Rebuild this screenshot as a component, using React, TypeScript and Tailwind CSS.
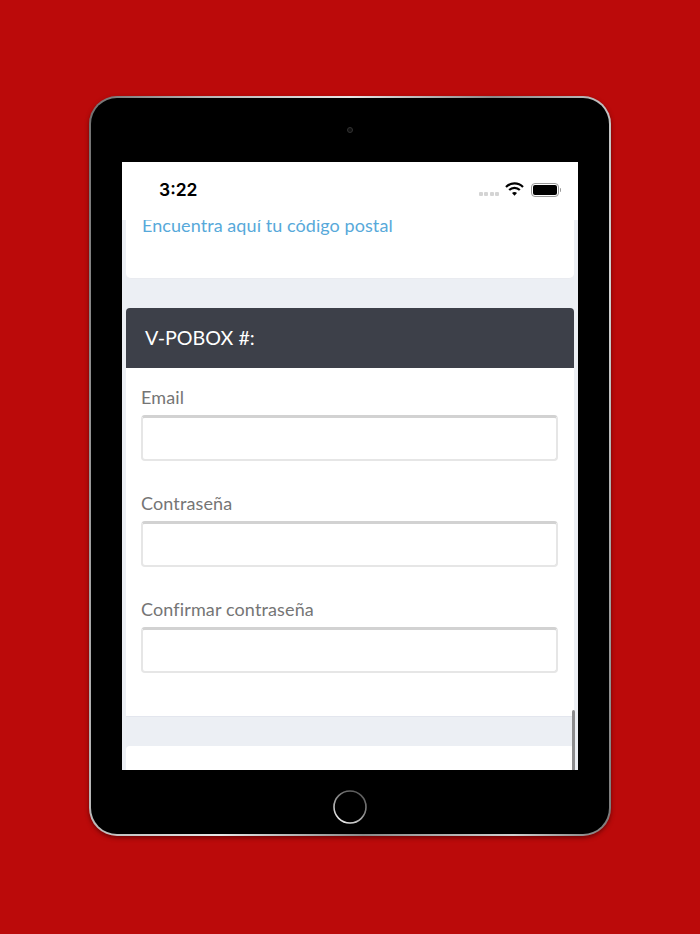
export default function App() {
  const fields = ["Email", "Contraseña", "Confirmar contraseña"];
  return (
    <div className="relative h-[934px] w-[700px] overflow-hidden bg-[#bb0a0a] pl-[89px] pt-[96px] font-['Lato',sans-serif]">
      <div className="h-[740px] w-[522px] rounded-[28px] bg-[linear-gradient(100deg,#6f6f6f_0%,#b5b5b5_18%,#e6e6e6_40%,#8a8a8a_62%,#d0d0d0_85%,#777_100%)] p-[2px] shadow-[0_2px_4px_rgba(60,0,0,0.6)]">
        <div className="flex h-[736px] w-[518px] flex-col items-center rounded-[26px] bg-black pt-[64px]">
          <div className="relative flex h-[608px] w-[456px] flex-col overflow-hidden bg-[#eceff4]">
            <div className="absolute left-0 top-0 z-10 flex h-[58px] w-full items-center justify-between bg-white pb-[3px] pl-[37px] pr-[17px]">
              <span className="font-['Inter',sans-serif] text-[17.5px] font-semibold leading-none text-black">3:22</span>
              <div className="flex items-center gap-[6px]">
                <div className="mt-[8px] flex gap-[1.5px]">
                  <span className="h-[4px] w-[4px] rounded-[1px] bg-[#d4d4d4]" />
                  <span className="h-[4px] w-[4px] rounded-[1px] bg-[#d4d4d4]" />
                  <span className="h-[4px] w-[4px] rounded-[1px] bg-[#d4d4d4]" />
                  <span className="h-[4px] w-[4px] rounded-[1px] bg-[#d4d4d4]" />
                </div>
                <svg width="19" height="14" viewBox="0 0 19 14" className="mb-[1px]">
                  <path d="M1 5 A12 12 0 0 1 18 5" fill="none" stroke="#000" strokeWidth="2.2" />
                  <path d="M4.2 8 A7.5 7.5 0 0 1 14.8 8" fill="none" stroke="#000" strokeWidth="2.2" />
                  <path d="M7 11 A3.4 3.4 0 0 1 12 11 L9.5 13.8 Z" fill="#000" />
                </svg>
                <div className="ml-[1px] flex items-center">
                  <div className="flex h-[14px] w-[28px] items-center justify-center rounded-[4px] border border-[#9a9a9a]">
                    <div className="h-[10px] w-[24px] rounded-[2px] bg-black" />
                  </div>
                  <div className="ml-[1px] h-[4px] w-[1px] rounded-r bg-[#9a9a9a]" />
                </div>
              </div>
            </div>

            <div className="mx-[4px] mt-[58px] h-[59px] shrink-0 overflow-hidden rounded-b-[5px] border-b border-[#e9ebf0] bg-white px-[16px]">
              <a className="-mt-[6px] block text-[18px] leading-[22px] tracking-[0.07px] text-[#57a9da]">Encuentra aquí tu código postal</a>
            </div>

            <div className="mx-[4px] mt-[29px] shrink-0">
              <div className="flex h-[60px] items-center rounded-t-[4px] bg-[#3d4049] px-[19px] text-[19.7px] text-white">V-POBOX #:</div>
              <div className="border-b border-[#e3e6ee] bg-white px-[15px] pb-[43px] pt-[17px]">
                {fields.map((f, i) => (
                  <div key={f} className={i < 2 ? "mb-[30px]" : ""}>
                    <label className="mb-[6px] block h-[24px] text-[18px] leading-[24px] tracking-[0.13px] text-[#757575]">{f}</label>
                    <div className="h-[46px] w-[417px] rounded-[4px] border-2 border-t-[3px] border-[#e6e6e6] border-t-[#d2d2d2] bg-white" />
                  </div>
                ))}
              </div>
            </div>

            <div className="mx-[4px] mt-[29px] flex-1 rounded-t-[4px] bg-white" />
            <div className="absolute bottom-0 right-[3px] h-[60px] w-[3px] rounded-t bg-[#8b8b8d]" />
          </div>
          <svg width="34" height="34" viewBox="0 0 34 34" className="mt-[20px]">
            <defs>
              <linearGradient id="homeRing" x1="0.8" y1="0" x2="0.2" y2="1">
                <stop offset="0" stopColor="#555" />
                <stop offset="0.45" stopColor="#888" />
                <stop offset="1" stopColor="#f2f2f2" />
              </linearGradient>
            </defs>
            <circle cx="17" cy="17" r="16" fill="none" stroke="url(#homeRing)" strokeWidth="1.6" />
          </svg>
        </div>
      </div>
      <span className="absolute left-[347px] top-[127px] h-[6px] w-[6px] rounded-full border border-[#333] bg-[#111]" />
    </div>
  );
}
